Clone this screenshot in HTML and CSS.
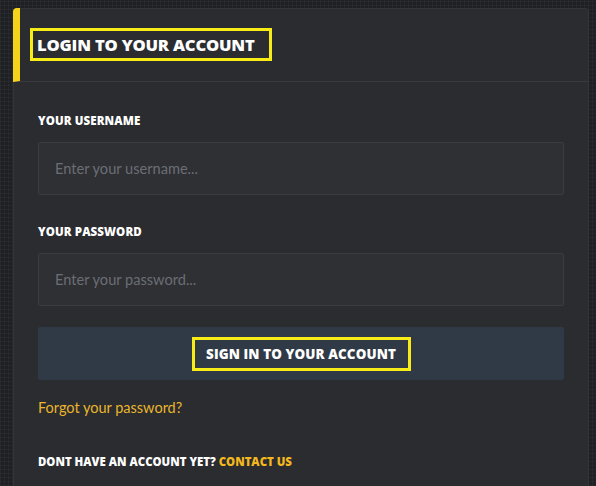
FILE: index.html
```html
<!DOCTYPE html>
<html>
<head>
<meta charset="utf-8">
<link rel="stylesheet" href="styles.css">
</head>
<body>
<div class="page">
  <div class="panel">
    <div class="panel-header">
      <h1 class="title-box">LOGIN TO YOUR ACCOUNT</h1>
    </div>
    <form class="panel-body">
      <label class="label">YOUR USERNAME</label>
      <input class="field" type="text" placeholder="Enter your username...">
      <label class="label label-second">YOUR PASSWORD</label>
      <input class="field" type="password" placeholder="Enter your password...">
      <div class="button">
        <span class="button-box">SIGN IN TO YOUR ACCOUNT</span>
      </div>
      <a class="forgot">Forgot your password?</a>
      <p class="signup">DONT HAVE AN ACCOUNT YET? <span class="accent">CONTACT US</span></p>
    </form>
  </div>
</div>
</body>
</html>
```
FILE: styles.css
```css
html, body {
  margin: 0;
  height: 100%;
  overflow: hidden;
}
body {
  background-color: #1f2023;
  background-image:
    repeating-linear-gradient(90deg, rgba(255,255,255,0.03) 0 1px, transparent 1px 4px),
    repeating-linear-gradient(0deg, rgba(255,255,255,0.03) 0 1px, transparent 1px 4px);
  font-family: "Open Sans", "Noto Sans", sans-serif;
}
.page {
  padding: 8px 7px 0 13px;
  height: 100%;
  box-sizing: border-box;
}
.panel {
  background: #2a2c30;
  border: 1px solid #33353a;
  border-bottom: none;
  border-radius: 4px 4px 0 0;
  height: 100%;
  box-sizing: border-box;
}
.panel-header {
  height: 73px;
  border-bottom: 1px solid #383a3f;
  border-left: 7px solid #f5d31a;
  border-top-left-radius: 4px;
  margin-left: -1px;
  margin-top: -1px;
  display: flex;
  align-items: center;
  box-sizing: content-box;
}
.title-box {
  margin: 0 0 0 10px;
  width: 242px;
  height: 33px;
  box-sizing: border-box;
  border: 3px solid #f8ec16;
  padding: 0 0 0 4px;
  display: flex;
  align-items: center;
  color: #ffffff;
  font-family: "Open Sans", sans-serif;
  font-weight: 800;
  font-size: 16.6px;
  letter-spacing: -0.2px;
  white-space: nowrap;
}
.panel-body {
  display: flex;
  flex-direction: column;
  align-items: flex-start;
  padding: 32px 24px 0 24px;
}
.label {
  color: #ffffff;
  font-weight: 800;
  font-size: 11.5px;
  line-height: 14px;
  letter-spacing: 0.1px;
  margin-bottom: 14px;
}
.label-second {
  margin-top: 30px;
}
.field {
  width: 100%;
  height: 53px;
  box-sizing: border-box;
  background: #2e3034;
  border: 1px solid #3a3c41;
  border-radius: 2px;
  padding: 0 16px;
  font-family: "Lato", "Noto Sans", sans-serif;
  font-size: 14.6px;
  color: #cfd1d4;
  outline: none;
}
.field::placeholder {
  color: #6b6e74;
}
.button {
  margin-top: 21px;
  width: 100%;
  height: 53px;
  background: #2f3a46;
  border-radius: 2px;
  display: flex;
  align-items: center;
  justify-content: center;
}
.button-box {
  width: 219px;
  height: 34px;
  box-sizing: border-box;
  border: 3px solid #f8ec16;
  display: flex;
  align-items: center;
  justify-content: center;
  color: #ffffff;
  font-weight: 800;
  font-size: 13.4px;
  letter-spacing: 0.1px;
  white-space: nowrap;
}
.forgot {
  margin-top: 19px;
  color: #ebb52c;
  font-family: "Lato", "Noto Sans", sans-serif;
  font-size: 14.5px;
  line-height: 18px;
}
.signup {
  margin: 38px 0 0 0;
  color: #ffffff;
  font-weight: 800;
  font-size: 11.4px;
  line-height: 14px;
}
.accent {
  color: #f3b81e;
}
```
